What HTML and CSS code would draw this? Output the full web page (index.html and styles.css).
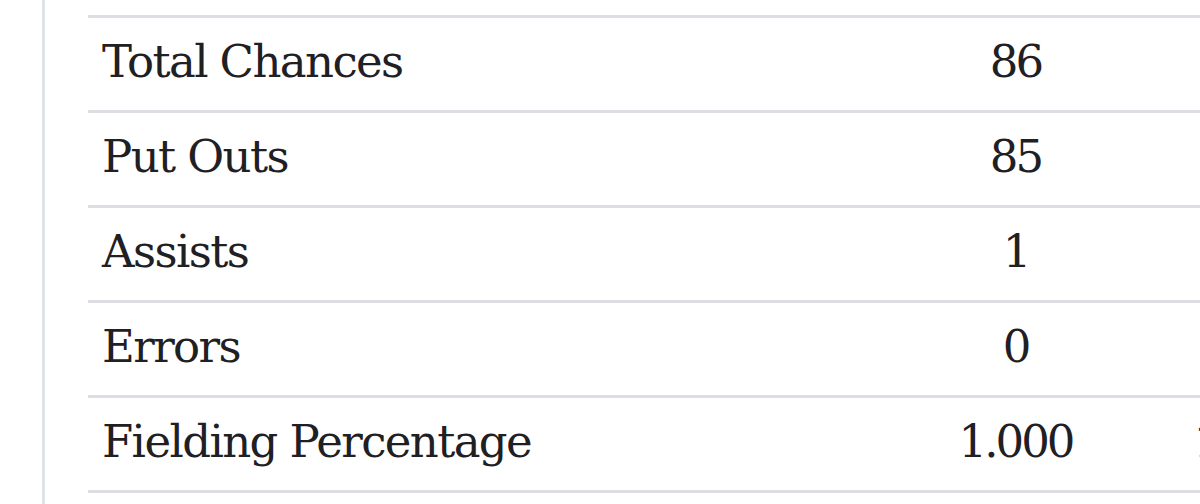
FILE: index.html
```html
<!DOCTYPE html>
<html lang="en">
<head>
<meta charset="utf-8">
<title>Fielding Stats</title>
<link rel="stylesheet" href="styles.css">
</head>
<body>
<div class="panel">
  <table class="stats">
    <tbody>
      <tr><td class="label">Total Chances</td><td class="val">86</td><td class="val">86</td></tr>
      <tr><td class="label">Put Outs</td><td class="val">85</td><td class="val">85</td></tr>
      <tr><td class="label">Assists</td><td class="val">1</td><td class="val">1</td></tr>
      <tr><td class="label">Errors</td><td class="val">0</td><td class="val">0</td></tr>
      <tr><td class="label">Fielding Percentage</td><td class="val">1.000</td><td class="val">1.000</td></tr>
    </tbody>
  </table>
</div>
</body>
</html>
```

FILE: styles.css
```css
html, body {
  margin: 0;
  padding: 0;
  background: #ffffff;
  overflow: hidden;
}

body {
  width: 1200px;
  height: 504px;
  font-family: "DejaVu Serif", "Liberation Serif", serif;
  color: #1f2023;
}

.panel {
  margin-left: 42px;
  border-left: 3px solid #dfe2e8;
  padding-left: 43px;
  padding-top: 15px;
  height: 504px;
  box-sizing: border-box;
  overflow: hidden;
}

.stats {
  border-collapse: collapse;
  width: 1280px;
  table-layout: fixed;
}

.stats td {
  border-top: 3px solid #dcdee3;
  border-bottom: 3px solid #dcdee3;
  height: 95px;
  padding: 0 0 6px 0;
  box-sizing: border-box;
  vertical-align: middle;
  font-size: 45px;
  line-height: 1;
}

.stats td.label {
  width: 810px;
  padding-left: 14px;
  letter-spacing: -1.6px;
}

.stats td.val {
  width: 235px;
  text-align: center;
  letter-spacing: -3px;
}
```
